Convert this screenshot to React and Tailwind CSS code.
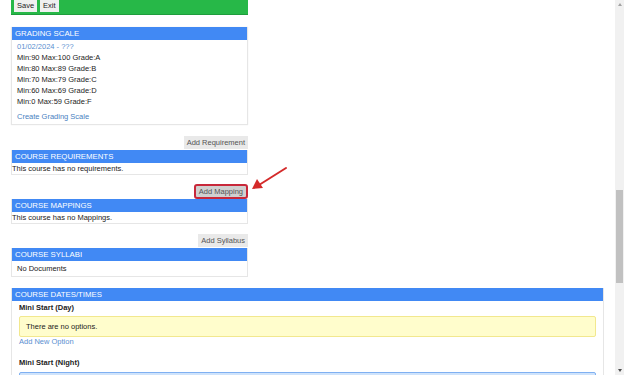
import React from 'react';

const font = { fontFamily: '"Liberation Sans", Arial, sans-serif' };

function Header({ children }) {
  return (
    <div className="bg-[#4189f4] text-white text-[7.8px] leading-[13px] h-[13px] px-[3px]">
      {children}
    </div>
  );
}

function AddButton({ children, highlight }) {
  return (
    <div className="flex justify-end">
      {highlight ? (
        <div className="rounded-[3px] border-2 border-[#c8283a] bg-[#d0d0d0] text-[#555] text-[7.5px] leading-[11px] h-[15px] px-[3px]">
          {children}
        </div>
      ) : (
        <div className="bg-[#e9e9e9] text-[#555] text-[7.5px] leading-[13px] h-[13px] px-[3px]">
          {children}
        </div>
      )}
    </div>
  );
}

export default function App() {
  const grades = [
    'Min:90 Max:100 Grade:A',
    'Min:80 Max:89 Grade:B',
    'Min:70 Max:79 Grade:C',
    'Min:60 Max:69 Grade:D',
    'Min:0 Max:59 Grade:F',
  ];

  return (
    <div className="w-[624px] h-[375px] overflow-hidden bg-white flex text-[#222]" style={font}>
      <div className="flex-1 relative">
        <div className="pl-[11px] w-[604px]">
          {/* Toolbar */}
          <div className="w-[237px] h-[15px] bg-[#27b848] border-b border-[#1f9c3c] flex items-start gap-[3px] pl-[3px]">
            <div className="bg-[#f0f0f0] text-[7.5px] leading-[12px] h-[12px] px-[3px] text-[#222]">Save</div>
            <div className="bg-[#f0f0f0] text-[7.5px] leading-[12px] h-[12px] px-[3px] text-[#222]">Exit</div>
          </div>

          {/* Grading scale */}
          <div className="w-[237px] mt-[12px] border-x border-b border-[#e6e6e6] shadow-[0_0_1px_rgba(0,0,0,0.1)]">
            <Header>GRADING SCALE</Header>
            <div className="h-[84px] px-[5px] pt-[1px] text-[7.5px] leading-[11px]">
              <div className="text-[#5b8fd0]">01/02/2024 - ???</div>
              {grades.map((g) => (
                <div key={g}>{g}</div>
              ))}
              <div className="text-[#4a7fc1] mt-[4px]">Create Grading Scale</div>
            </div>
          </div>

          {/* Requirements */}
          <div className="w-[237px] mt-[11px]">
            <AddButton>Add Requirement</AddButton>
            <div className="border-x border-b border-[#e6e6e6] mt-[1px]">
              <Header>COURSE REQUIREMENTS</Header>
              <div className="text-[7.5px] leading-[11px] h-[11px]">This course has no requirements.</div>
            </div>
          </div>

          {/* Mappings */}
          <div className="w-[237px] mt-[9px]">
            <AddButton highlight>Add Mapping</AddButton>
            <div className="border-x border-b border-[#e6e6e6]">
              <Header>COURSE MAPPINGS</Header>
              <div className="text-[7.5px] leading-[11px] h-[11px]">This course has no Mappings.</div>
            </div>
          </div>

          {/* Syllabi */}
          <div className="w-[237px] mt-[10px]">
            <AddButton>Add Syllabus</AddButton>
            <div className="border-x border-b border-[#e6e6e6] mt-[1px]">
              <Header>COURSE SYLLABI</Header>
              <div className="text-[7.5px] leading-[15px] h-[15px] px-[5px]">No Documents</div>
            </div>
          </div>

          {/* Dates/times */}
          <div className="w-[593px] mt-[11px] border-x border-[#e6e6e6]">
            <Header>COURSE DATES/TIMES</Header>
            <div className="px-[7px] pt-[1px]">
              <div className="text-[7.5px] leading-[12px] font-bold">Mini Start (Day)</div>
              <div className="mt-[2px] h-[21px] bg-[#fffdcc] border border-[#f2e88e] rounded-[2px] text-[7.5px] leading-[19px] px-[6px]">
                There are no options.
              </div>
              <div className="text-[7.5px] leading-[10px] text-[#5b8fd0]">Add New Option</div>
              <div className="text-[7.5px] leading-[12px] font-bold mt-[10px]">Mini Start (Night)</div>
              <div className="mt-[3px] h-[22px] bg-[#cfe3fb] border border-[#7fb0f2] rounded-[2px]"></div>
            </div>
          </div>
        </div>

        {/* Annotation arrow */}
        <svg className="absolute left-[248px] top-[164px]" width="44" height="30" viewBox="0 0 44 30">
          <line x1="38" y1="4" x2="11" y2="21" stroke="#d42a2a" strokeWidth="2" strokeLinecap="round" />
          <polygon points="4,25 9,15 15,24" fill="#d42a2a" />
        </svg>
      </div>

      {/* Scrollbar */}
      <div className="w-[9px] h-full bg-[#f1f1f1] flex flex-col items-center">
        <div className="h-[9px] flex items-center justify-center">
          <div className="w-0 h-0 border-l-[2.5px] border-r-[2.5px] border-b-[3px] border-l-transparent border-r-transparent border-b-[#a3a3a3]" />
        </div>
        <div className="h-[181px]" />
        <div className="w-[7px] h-[93px] bg-[#c1c1c1]" />
        <div className="flex-1" />
        <div className="h-[9px] flex items-center justify-center">
          <div className="w-0 h-0 border-l-[2.5px] border-r-[2.5px] border-t-[3px] border-l-transparent border-r-transparent border-t-[#505050]" />
        </div>
      </div>
    </div>
  );
}
